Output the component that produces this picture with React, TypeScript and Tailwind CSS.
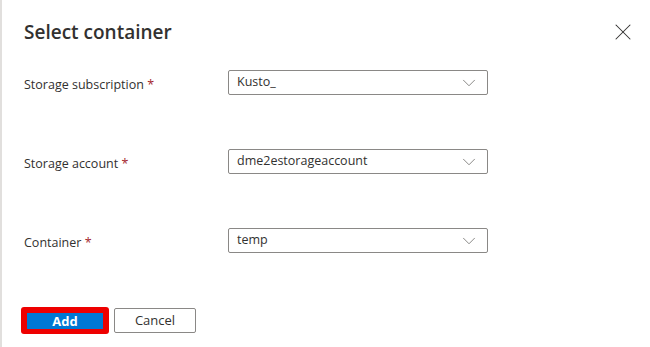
import { ChevronDown, X } from 'lucide-react';

interface FieldProps {
  label: string;
  value: string;
}

const Field = ({ label, value }: FieldProps) => (
  <div className="flex items-center h-[25px]">
    <label className="w-[204px] pt-[5px] text-[12.5px] text-[#323130]">
      {label} <span className="text-[#a4262c]">*</span>
    </label>
    <div className="flex items-center justify-between w-[260px] h-[25px] pl-[8px] pr-[7px] border border-[#8a8886] rounded-[2px] bg-white">
      <span className="text-[12.5px] text-[#323130]">{value}</span>
      <ChevronDown size={22} strokeWidth={0.8} className="text-[#605e5c]" />
    </div>
  </div>
);

const App = () => {
  return (
    <div
      className="relative w-[650px] h-[347px] bg-white border-l-2 border-[#e1dfdd] flex flex-col"
      style={{ fontFamily: '"Open Sans", "Noto Sans", sans-serif' }}
    >
      <header className="flex items-center justify-between pl-[22px] pr-[13px] pt-[18px]">
        <h1 className="text-[19px] font-semibold text-[#323130] leading-[28px]">Select container</h1>
        <X size={28} strokeWidth={0.9} className="text-[#323130]" />
      </header>

      <section className="flex flex-col gap-[54px] pl-[22px] mt-[24px]">
        <Field label="Storage subscription" value="Kusto_" />
        <Field label="Storage account" value="dme2estorageaccount" />
        <Field label="Container" value="temp" />
      </section>

      <footer className="flex items-center gap-[5px] pl-[19px] mt-auto mb-[13px]">
        <div className="flex pt-[6px] pb-[5px] px-[6px] bg-[#ee0000] rounded-[3px]">
          <button className="w-[76px] h-[16px] bg-[#0078d4] text-white text-[13px] font-bold leading-[16px]">
            Add
          </button>
        </div>
        <button className="w-[82px] h-[25px] border border-[#8a8886] rounded-[2px] bg-white text-[13px] font-medium text-[#323130]">
          Cancel
        </button>
      </footer>
    </div>
  );
};

export default App;
